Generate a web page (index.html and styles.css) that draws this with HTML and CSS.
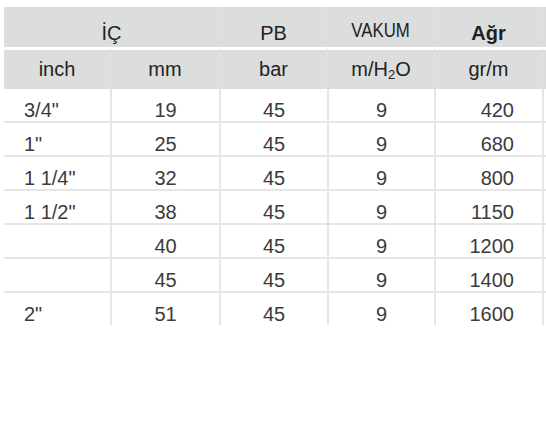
FILE: index.html
```html
<!DOCTYPE html>
<html lang="tr">
<head>
<meta charset="utf-8">
<link rel="stylesheet" href="styles.css">
</head>
<body>
<table class="spec">
  <colgroup>
    <col class="c1"><col class="c2"><col class="c3"><col class="c4"><col class="c5"><col class="c6">
  </colgroup>
  <thead>
    <tr class="h1">
      <th colspan="2">İÇ</th>
      <th class="sep">PB</th>
      <th class="sep"><span class="narrow">VAKUM</span></th>
      <th class="sep bold">Ağr</th>
      <th class="sep"></th>
    </tr>
    <tr class="h2">
      <th>inch</th>
      <th class="sep">mm</th>
      <th class="sep">bar</th>
      <th class="sep">m/H<sub>2</sub>O</th>
      <th class="sep">gr/m</th>
      <th class="sep"></th>
    </tr>
  </thead>
  <tbody>
    <tr><td class="l">3/4"</td><td>19</td><td>45</td><td>9</td><td class="r">420</td><td></td></tr>
    <tr><td class="l">1"</td><td>25</td><td>45</td><td>9</td><td class="r">680</td><td></td></tr>
    <tr><td class="l">1 1/4"</td><td>32</td><td>45</td><td>9</td><td class="r">800</td><td></td></tr>
    <tr><td class="l">1 1/2"</td><td>38</td><td>45</td><td>9</td><td class="r">1150</td><td></td></tr>
    <tr><td class="l"></td><td>40</td><td>45</td><td>9</td><td class="r">1200</td><td></td></tr>
    <tr><td class="l"></td><td>45</td><td>45</td><td>9</td><td class="r">1400</td><td></td></tr>
    <tr class="last"><td class="l">2"</td><td>51</td><td>45</td><td>9</td><td class="r">1600</td><td></td></tr>
  </tbody>
</table>
</body>
</html>
```

FILE: styles.css
```css
html, body {
  margin: 0;
  padding: 0;
  background: #fff;
  overflow: hidden;
}
body {
  padding: 7px 0 0 4px;
  font-family: "Liberation Sans", Arial, sans-serif;
}
.spec {
  border-collapse: separate;
  border-spacing: 0;
  table-layout: fixed;
  width: 542px;
  font-size: 20px;
  line-height: 20px;
  color: #3b3b3b;
}
.c1 { width: 106px; }
.c2 { width: 109px; }
.c3 { width: 108px; }
.c4 { width: 107px; }
.c5 { width: 108px; }
.c6 { width: 4px; }

.spec th {
  background: #dcdddd;
  color: #232323;
  font-weight: normal;
  text-align: center;
  vertical-align: top;
  padding: 0;
  white-space: nowrap;
}
.h1 th {
  height: 20px;
  padding: 16px 0 4px;
}
.h1 th.sep { border-left: 1px solid rgba(255,255,255,0.12); }
.h2 th {
  height: 20px;
  padding: 9px 0 10px;
  border-top: 3px solid #fff;
}
.h2 th.sep { border-left: 1px solid rgba(255,255,255,0.12); }
.narrow {
  display: inline-block;
  font-size: 21px;
  transform: scaleX(0.8);
  position: relative;
  top: -3px;
  color: #1e1e1e;
}
.bold { font-weight: bold !important; color: #1f1f1f !important; }
.spec sub {
  font-size: 13px;
  line-height: 0;
  vertical-align: -3px;
}
.spec td {
  height: 20px;
  padding: 11px 0 1px;
  text-align: center;
  vertical-align: top;
  border-bottom: 2px solid #e6e6e6;
  border-left: 2px solid #e6e6e6;
  white-space: nowrap;
}
.spec td.l {
  text-align: left;
  padding-left: 20px;
  border-left: none;
}
.spec td.r {
  text-align: right;
  padding-right: 28px;
}
.spec tr.last td {
  border-bottom: none;
}
```
